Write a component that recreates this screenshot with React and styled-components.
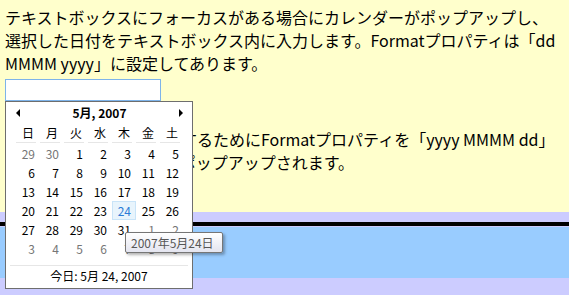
import React from "react";
import styled, { createGlobalStyle } from "styled-components";

const GlobalStyle = createGlobalStyle`
  html, body {
    margin: 0;
    padding: 0;
  }
  body {
    background: #ccccff;
    font-family: "Noto Sans CJK JP", sans-serif;
    color: #000;
  }
`;

const Page = styled.div`
  width: 569px;
  height: 295px;
  overflow: hidden;
`;

const SamplePanel = styled.div`
  background: #ffffcc;
  padding: 6px 5px 12px;
`;

const Text = styled.p`
  margin: ${(p) => p.$gap || 0}px 0 0;
  font-size: 16px;
  line-height: 23px;
  white-space: nowrap;
`;

const Field = styled.div`
  position: relative;
  margin-top: 4px;
  width: 156px;
  height: 22px;
`;

const TextBox = styled.input`
  box-sizing: border-box;
  display: block;
  width: 156px;
  height: 22px;
  margin: 0;
  padding: 1px 3px;
  border: 1px solid ${(p) => (p.$focused ? "#7eb4ea" : "#abadb3")};
  background: #fff;
  outline: none;
  font: 13px "Noto Sans CJK JP", sans-serif;
`;

const Popup = styled.div`
  position: absolute;
  top: 100%;
  left: 0;
  z-index: 2;
  box-sizing: border-box;
  width: 188px;
  height: 188px;
  background: #fff;
  border: 1px solid #6e6e6e;
  font-size: 12px;
  color: #000;
`;

const Header = styled.div`
  display: flex;
  align-items: center;
  justify-content: space-between;
  height: 21px;
  padding: 0 9px 0 10px;
`;

const Arrow = styled.span`
  width: 0;
  height: 0;
  border-top: 4px solid transparent;
  border-bottom: 4px solid transparent;
  ${(p) =>
    p.$dir === "left"
      ? "border-right: 4px solid #000;"
      : "border-left: 4px solid #000;"}
`;

const Title = styled.span`
  font-weight: bold;
  line-height: 21px;
`;

const Grid = styled.div`
  display: grid;
  grid-template-columns: repeat(7, 24px);
  margin-left: 10px;
`;

const DayName = styled.div`
  position: relative;
  height: 21px;
  line-height: 19px;
  text-align: center;
  &::after {
    content: "";
    position: absolute;
    left: 0;
    bottom: 1px;
    width: 20px;
    height: 1px;
    background: #e6e6e6;
  }
`;

const Day = styled.div`
  box-sizing: border-box;
  height: 19px;
  line-height: 19px;
  padding-right: 5px;
  text-align: right;
  color: ${(p) => (p.$selected ? "#2b7bd6" : p.$other ? "#767676" : "#000")};
  background: ${(p) => (p.$selected ? "#e8f4fc" : "transparent")};
  box-shadow: ${(p) => (p.$selected ? "inset 0 0 0 1px #c9e4f8" : "none")};
`;

const Divider = styled.div`
  height: 1px;
  margin: 7px 4px 0;
  background: #e6e6e6;
`;

const Today = styled.div`
  line-height: 20px;
  text-align: center;
`;

const Tooltip = styled.div`
  position: absolute;
  left: 119px;
  top: 130px;
  box-sizing: border-box;
  height: 21px;
  padding: 0 8px 0 5px;
  border: 1px solid #767676;
  border-radius: 2px;
  background: linear-gradient(#ffffff, #e4e5f0);
  box-shadow: 2px 2px 3px rgba(0, 0, 0, 0.3);
  color: #575757;
  font-size: 12px;
  line-height: 19px;
  white-space: nowrap;
`;

const Rule = styled.div`
  margin-top: 10px;
  height: 4px;
  background: #000;
`;

const BluePanel = styled.div`
  margin-top: 1px;
  height: 51px;
  background: #99ccff;
`;

const dayNames = ["日", "月", "火", "水", "木", "金", "土"];

const days = [
  ...[29, 30].map((d) => ({ d, other: true })),
  ...Array.from({ length: 31 }, (_, i) => ({ d: i + 1 })),
  ...[1, 2, 3, 4, 5, 6, 7, 8, 9].map((d) => ({ d, other: true })),
];

const Calendar = () => (
  <Popup>
    <Header>
      <Arrow $dir="left" />
      <Title>5月, 2007</Title>
      <Arrow $dir="right" />
    </Header>
    <Grid>
      {dayNames.map((n) => (
        <DayName key={n}>{n}</DayName>
      ))}
      {days.map((x, i) => (
        <Day key={i} $other={x.other} $selected={!x.other && x.d === 24}>
          {x.d}
        </Day>
      ))}
    </Grid>
    <Divider />
    <Today>今日: 5月 24, 2007</Today>
    <Tooltip>2007年5月24日</Tooltip>
  </Popup>
);

export default function App() {
  return (
    <Page>
      <GlobalStyle />
      <SamplePanel>
        <Text>
          テキストボックスにフォーカスがある場合にカレンダーがポップアップし、
          <br />
          選択した日付をテキストボックス内に入力します。Formatプロパティは「dd
          <br />
          MMMM yyyy」に設定してあります。
        </Text>
        <Field>
          <TextBox $focused defaultValue="" />
          <Calendar />
        </Field>
        <Text $gap={27}>
          日付を年月日の順に表示するためにFormatプロパティを「yyyy MMMM dd」
          <br />
          に設定しても同じようにポップアップされます。
        </Text>
        <Field>
          <TextBox defaultValue="" />
        </Field>
      </SamplePanel>
      <Rule />
      <BluePanel />
    </Page>
  );
}
